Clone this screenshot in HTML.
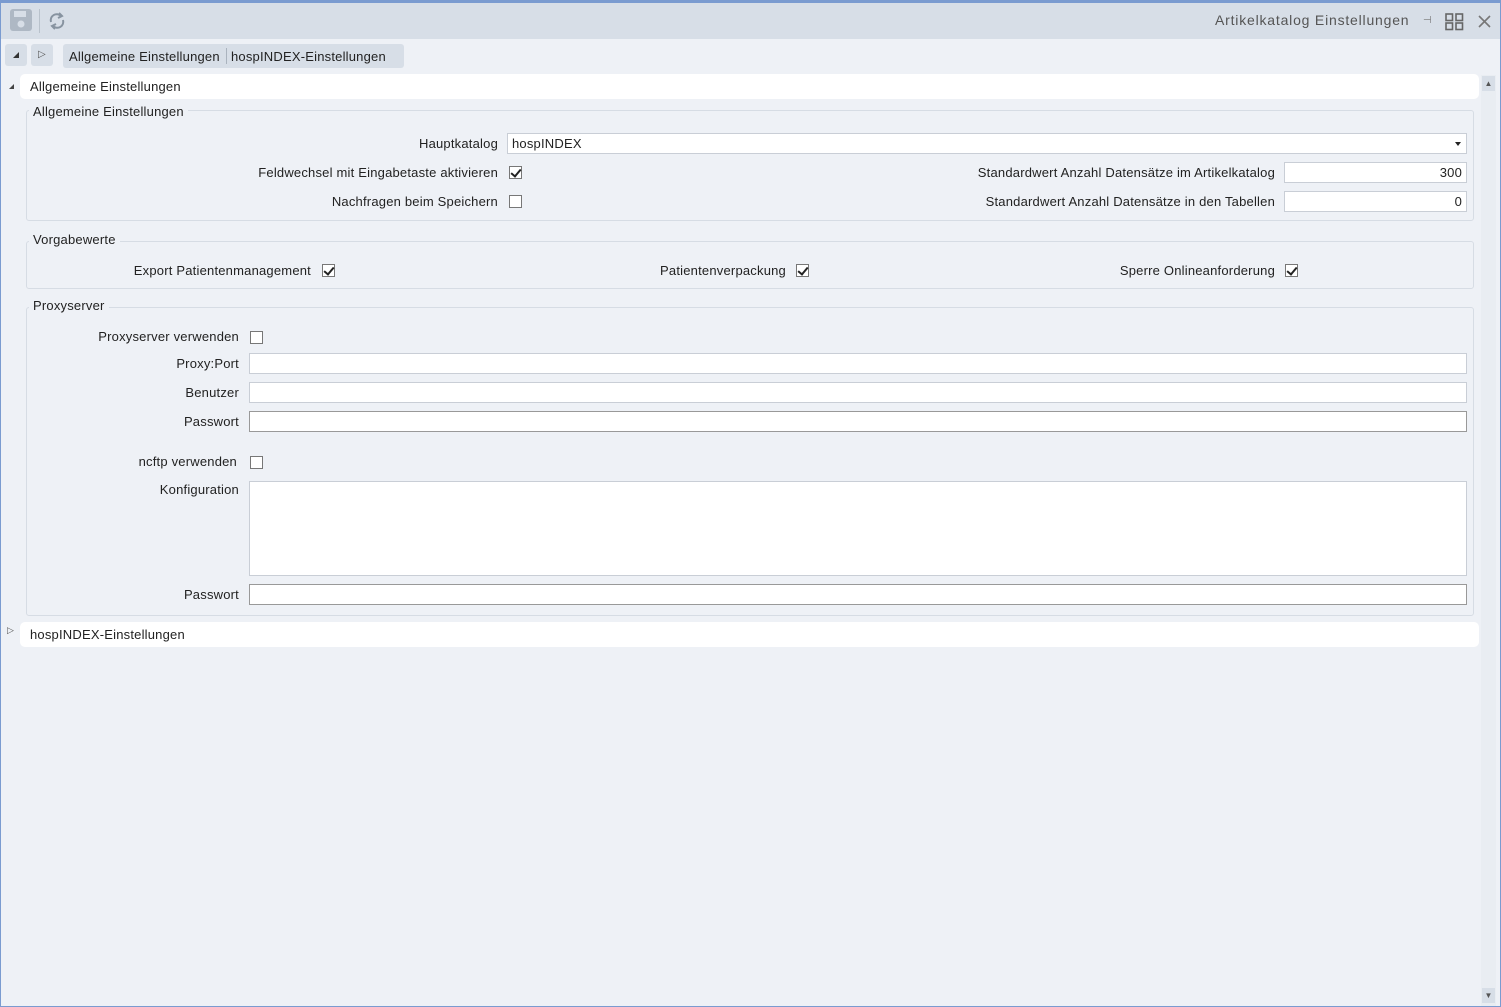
<!DOCTYPE html>
<html><head><meta charset="utf-8"><style>
*{box-sizing:border-box;margin:0;padding:0}
body{width:1501px;height:1007px;overflow:hidden;font-family:"Liberation Sans",sans-serif;font-size:13px;letter-spacing:0.2px;color:#222;background:#fff}
.win{position:absolute;left:0;top:0;width:1501px;height:1007px;border:1px solid #7a9bd0;border-top:3px solid #7a9bd0;background:#eef1f6}
.a{position:absolute}
.top{left:0;top:0;width:1499px;height:36px;background:#d7dee7}
.lbl{position:absolute;text-align:right;white-space:nowrap}
.inp{position:absolute;background:#fff;border:1px solid #c9ced6;height:21px}
.cb{position:absolute;width:13px;height:13px;border:1px solid #777;background:#fff}
.cb.on::after{content:"";position:absolute;left:3px;top:0px;width:4px;height:8px;border:solid #222;border-width:0 2px 2px 0;transform:rotate(40deg)}
.fs{position:absolute;border:1px solid #d6dce4;border-radius:3px}
.leg{position:absolute;background:#eef1f6;padding:0 4px;white-space:nowrap}
.hdr{position:absolute;background:#fff;border-radius:5px;height:25px;line-height:25px;padding-left:10px}
</style></head><body>
<div class="win">
<div class="a top"></div>
<svg class="a" style="left:9px;top:6px" width="24" height="24"><rect x="0" y="0" width="22" height="22" rx="3" fill="#aeb8c4"/><rect x="4" y="2" width="12" height="6" fill="#d7dee7"/><circle cx="11" cy="15" r="3.5" fill="#d7dee7"/></svg>
<div class="a" style="left:38px;top:6px;width:1px;height:24px;background:#b9c2cc"></div>
<svg class="a" style="left:46px;top:7px" width="20" height="22" fill="none" stroke="#8793a0" stroke-width="2"><path d="M4 12 A6 6 0 0 1 14 6"/><path d="M12 3 L15 6 L11 8"/><path d="M16 10 A6 6 0 0 1 6 16"/><path d="M8 19 L5 16 L9 14"/></svg>
<div class="a" style="left:1214px;top:9px;font-size:14px;letter-spacing:0.8px;color:#555">Artikelkatalog Einstellungen</div>
<div class="a" style="left:1422px;top:12px;font-size:10px;color:#777">⊣</div>
<svg class="a" style="left:1444px;top:10px" width="19" height="18" fill="none" stroke="#666" stroke-width="1.6"><rect x="1" y="1" width="6.5" height="6.5"/><rect x="11" y="1" width="6.5" height="6.5"/><rect x="1" y="10" width="6.5" height="6.5"/><rect x="11" y="10" width="6.5" height="6.5"/></svg>
<svg class="a" style="left:1477px;top:12px" width="13" height="13" stroke="#777" stroke-width="1.6"><path d="M1 1L12 12M12 1L1 12"/></svg>

<div class="a" style="left:4px;top:41px;width:22px;height:22px;background:#d7dee7;border-radius:3px"></div>
<div class="a" style="left:12px;top:49px;width:0;height:0;border-left:6px solid transparent;border-bottom:6px solid #333"></div>
<div class="a" style="left:30px;top:41px;width:22px;height:22px;background:#d7dee7;border-radius:3px;color:#555;font-size:10px;text-align:center;line-height:22px">▷</div>
<div class="a" style="left:62px;top:41px;width:341px;height:24px;background:#d7dee7;border-radius:3px"></div>
<div class="a" style="left:68px;top:46px">Allgemeine Einstellungen</div>
<div class="a" style="left:225px;top:45px;width:1px;height:16px;background:#aab3be"></div>
<div class="a" style="left:230px;top:46px">hospINDEX-Einstellungen</div>

<div class="a" style="left:8px;top:81px;width:0;height:0;border-left:5px solid transparent;border-bottom:5px solid #444"></div>
<div class="hdr" style="left:19px;top:71px;width:1459px">Allgemeine Einstellungen</div>
<div class="a" style="left:1480px;top:72px;width:15px;height:931px;background:#e9edf2"></div>
<div class="a" style="left:1481px;top:73px;width:13px;height:15px;background:#d7dee7;font-size:8px;text-align:center;line-height:15px;color:#555">▲</div>
<div class="a" style="left:1481px;top:985px;width:13px;height:15px;background:#d7dee7;font-size:8px;text-align:center;line-height:15px;color:#555">▼</div>

<div class="fs" style="left:25px;top:107px;width:1448px;height:111px"></div>
<div class="leg" style="left:28px;top:101px">Allgemeine Einstellungen</div>
<div class="lbl" style="right:1002px;top:133px">Hauptkatalog</div>
<div class="inp" style="left:506px;top:130px;width:960px;padding:2px 4px">hospINDEX</div>
<div class="a" style="left:1454px;top:139px;border-left:3.5px solid transparent;border-right:3.5px solid transparent;border-top:4px solid #222"></div>
<div class="lbl" style="right:1002px;top:162px">Feldwechsel mit Eingabetaste aktivieren</div>
<div class="cb on" style="left:508px;top:163px"></div>
<div class="lbl" style="right:1002px;top:191px">Nachfragen beim Speichern</div>
<div class="cb" style="left:508px;top:192px"></div>
<div class="lbl" style="right:225px;top:162px">Standardwert Anzahl Datensätze im Artikelkatalog</div>
<div class="inp" style="left:1283px;top:159px;width:183px;text-align:right;padding:2px 4px">300</div>
<div class="lbl" style="right:225px;top:191px">Standardwert Anzahl Datensätze in den Tabellen</div>
<div class="inp" style="left:1283px;top:188px;width:183px;text-align:right;padding:2px 4px">0</div>

<div class="fs" style="left:25px;top:238px;width:1448px;height:48px"></div>
<div class="leg" style="left:28px;top:229px">Vorgabewerte</div>
<div class="lbl" style="right:1189px;top:260px">Export Patientenmanagement</div>
<div class="cb on" style="left:321px;top:261px"></div>
<div class="lbl" style="right:714px;top:260px">Patientenverpackung</div>
<div class="cb on" style="left:795px;top:261px"></div>
<div class="lbl" style="right:225px;top:260px">Sperre Onlineanforderung</div>
<div class="cb on" style="left:1284px;top:261px"></div>

<div class="fs" style="left:25px;top:304px;width:1448px;height:309px"></div>
<div class="leg" style="left:28px;top:295px">Proxyserver</div>
<div class="lbl" style="right:1261px;top:326px">Proxyserver verwenden</div>
<div class="cb" style="left:249px;top:328px"></div>
<div class="lbl" style="right:1261px;top:353px">Proxy:Port</div>
<div class="inp" style="left:248px;top:350px;width:1218px"></div>
<div class="lbl" style="right:1261px;top:382px">Benutzer</div>
<div class="inp" style="left:248px;top:379px;width:1218px"></div>
<div class="lbl" style="right:1261px;top:411px">Passwort</div>
<div class="inp" style="left:248px;top:408px;width:1218px;border-color:#999"></div>
<div class="lbl" style="right:1263px;top:451px">ncftp verwenden</div>
<div class="cb" style="left:249px;top:453px"></div>
<div class="lbl" style="right:1261px;top:479px">Konfiguration</div>
<div class="inp" style="left:248px;top:478px;width:1218px;height:95px"></div>
<div class="lbl" style="right:1261px;top:584px">Passwort</div>
<div class="inp" style="left:248px;top:581px;width:1218px;border-color:#999"></div>

<div class="a" style="left:6px;top:622px;font-size:9px;color:#555">▷</div>
<div class="hdr" style="left:19px;top:619px;width:1459px">hospINDEX-Einstellungen</div>
</div>
</body></html>
